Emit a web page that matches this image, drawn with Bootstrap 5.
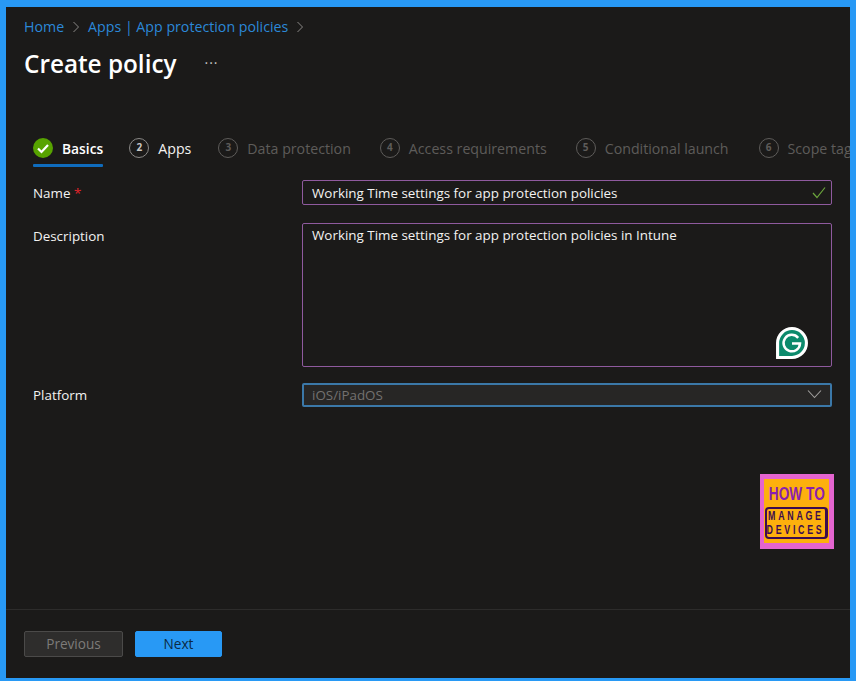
<!DOCTYPE html>
<html lang="en">
<head>
<meta charset="utf-8">
<title>Create policy</title>
<link href="https://cdn.jsdelivr.net/npm/bootstrap@5.3.0/dist/css/bootstrap.min.css" rel="stylesheet">
<style>
html,body{height:681px;overflow:hidden;background:#1b1a19}
body{font-family:"Open Sans","Noto Sans",sans-serif;font-size:13.4px;color:#f3f2f1}
.frame{width:856px;height:681px;border-style:solid;border-color:#2899f5;border-width:7px 6px 3px 6px;background:#1b1a19;display:flex;flex-direction:column;overflow:hidden}
.main-area{flex:1 1 auto;padding:0 18px 0 27px;min-height:0;position:relative}
.crumbs{margin:11px 0 0 -9px;padding:0;height:18px;line-height:18px;font-size:14.2px;gap:8px;color:#8a8886}
.crumbs a{color:#2b88d8;text-decoration:none}
.chev{width:8px;height:12px;display:block}
.title-row{margin:10px 0 0 -9px;height:36px;gap:28px}
.page-title{font-size:24.3px;font-weight:600;color:#fff;margin:0;line-height:36px}
.dots{color:#c8c6c4;font-size:14px;line-height:14px;letter-spacing:1px;margin-top:-10px}
.steps{margin-top:55px;height:40px;white-space:nowrap;gap:26px;overflow:hidden;margin-right:-18px;font-size:14.2px}
.stp{display:flex;align-items:flex-start;gap:9px;height:36px;padding-top:1px;color:#8a8886;line-height:20px}
.stp>span:last-child{padding-top:1px}
.stp.on{position:relative;color:#fff;font-weight:600;font-size:13.800px}
.stp.on::after{content:"";position:absolute;left:0;right:0;top:27px;height:3px;background:#0f6cbd;border-radius:1px}
.stp.en{color:#f3f2f1}
.stp.en .num{border-color:#8a8886;color:#c8c6c4}
.stp.off{color:#5e5c5a}
.stp:nth-child(3){margin-left:1px}
.stp:nth-child(4){margin-left:3px}
.stp:nth-child(5){margin-left:3px}
.stp:nth-child(6){margin-left:4px}
.num{width:20px;height:20px;border:1px solid currentColor;border-radius:50%;font-size:10px;font-weight:700;line-height:17px;text-align:center;flex:none}
.tick{width:20px;height:20px;flex:none;display:block}
.frow{display:flex;align-items:flex-start}
.flabel{width:269px;flex:none;line-height:20px;color:#f3f2f1;padding-top:3px}
.flabel.tight{padding-top:2px}
.req{color:#e3242b}
.fbox{width:530px;border:1px solid #8f5a9e;border-radius:2px;background:#1b1a19;color:#f3f2f1;padding:0 9px;position:relative}
.b-name{height:25px;line-height:24px}
.b-desc{height:144px;line-height:23px}
.b-plat{height:24px;line-height:21px;border:2px solid #3b78a8;background:#272625;color:#737170;padding:0 8px}
.okmark{position:absolute;right:5px;top:5px;width:14px;height:13px}
.gram{position:absolute;right:22px;bottom:6px;width:34px;height:34px}
.caret{position:absolute;right:8px;top:4px;width:15px;height:10px}
.logo-row{display:flex;justify-content:flex-end;margin-top:67px}
.logo-tile{width:74px;height:75px;background:#fdb00d;border:solid #e464cf;border-width:5px 5px 6px 4px;display:flex;flex-direction:column;align-items:center;font-family:"Liberation Sans",sans-serif;font-weight:700;line-height:1;margin-right:-2px}
.logo-how{font-size:18px;margin-top:6px;line-height:18px;transform:scaleX(.76);white-space:nowrap;color:#8a1fb0}
.logo-box{margin-top:4px;width:63px;height:32px;border:2px solid #3b0d4f;border-right-width:3px;border-radius:4px;color:#3b0d4f;font-size:13px;text-align:center;overflow:hidden;display:flex;flex-direction:column;align-items:center}
.logo-line{display:block;line-height:14px;letter-spacing:4px;transform:scaleX(.68);white-space:nowrap}
.bottom{height:69px;flex:none;border-top:1px solid #2d2c2b;padding:21px 0 0 18px;gap:12px;display:flex;align-items:flex-start}
.bar-btn{height:26px;border-radius:2px;font-size:13.600px;line-height:22px;padding:0;box-shadow:none}
.btn-prev{width:99px;background:#2e2d2c;border:1px solid #4b4a49;color:#7d7b79}
.btn-prev:disabled{background:#2e2d2c;border-color:#4b4a49;color:#7d7b79;opacity:1}
.btn-go{width:87px;background:#2899f5;border:1px solid #2899f5;color:#0b2a44}
</style>
</head>
<body>
<div class="frame">
  <div class="main-area">
    <nav class="crumbs d-flex align-items-center">
      <a href="#">Home</a>
      <svg class="chev" viewBox="0 0 8 12"><path d="M1.500 1l5 5-5 5" fill="none" stroke="#8a8886" stroke-width="1"/></svg>
      <a href="#">Apps | App protection policies</a>
      <svg class="chev" viewBox="0 0 8 12"><path d="M1.500 1l5 5-5 5" fill="none" stroke="#8a8886" stroke-width="1"/></svg>
    </nav>
    <div class="title-row d-flex align-items-center">
      <h1 class="page-title">Create policy</h1>
      <span class="dots">...</span>
    </div>
    <div class="steps d-flex">
      <div class="stp on">
        <svg class="tick" viewBox="0 0 20 20"><circle cx="10" cy="10" r="10" fill="#57a300"/><path d="M5 10.500l3.500 3.500 6.500-7" fill="none" stroke="#fff" stroke-width="2.200"/></svg>
        <span>Basics</span>
      </div>
      <div class="stp en"><span class="num">2</span><span>Apps</span></div>
      <div class="stp off"><span class="num">3</span><span>Data protection</span></div>
      <div class="stp off"><span class="num">4</span><span>Access requirements</span></div>
      <div class="stp off"><span class="num">5</span><span>Conditional launch</span></div>
      <div class="stp off"><span class="num">6</span><span>Scope tags</span></div>
    </div>
    <div class="frow" style="margin-top:3px">
      <div class="flabel">Name <span class="req">*</span></div>
      <div class="fbox b-name">Working Time settings for app protection policies
        <svg class="okmark" viewBox="0 0 14 13"><path d="M1 7l4 4.500 8-10" fill="none" stroke="#6ba53c" stroke-width="1.200"/></svg>
      </div>
    </div>
    <div class="frow" style="margin-top:18px">
      <div class="flabel">Description</div>
      <div class="fbox b-desc">Working Time settings for app protection policies in Intune
        <svg class="gram" viewBox="0 0 33 33"><path d="M1 16.500A15.500 15.500 0 1 1 16.500 32H1z" fill="#fff"/><path d="M4 16.500A12.500 12.500 0 1 1 16.500 29H4z" fill="#0c8a6c"/><path d="M22.500 11.500A8 8 0 1 0 24.300 17H16.500" fill="none" stroke="#fff" stroke-width="2.400"/></svg>
      </div>
    </div>
    <div class="frow" style="margin-top:16px">
      <div class="flabel tight">Platform</div>
      <div class="fbox b-plat">iOS/iPadOS
        <svg class="caret" viewBox="0 0 15 10"><path d="M1 1.500l6.500 7 6.500-7" fill="none" stroke="#a19f9d" stroke-width="1.100"/></svg>
      </div>
    </div>
    <div class="logo-row">
      <div class="logo-tile">
        <div class="logo-how">HOW TO</div>
        <div class="logo-box"><span class="logo-line">MANAGE</span><span class="logo-line">DEVICES</span></div>
      </div>
    </div>
  </div>
  <div class="bottom">
    <button type="button" class="btn bar-btn btn-prev" disabled>Previous</button>
    <button type="button" class="btn bar-btn btn-go">Next</button>
  </div>
</div>
<script src="https://cdn.jsdelivr.net/npm/bootstrap@5.3.0/dist/js/bootstrap.bundle.min.js"></script>
</body>
</html>
